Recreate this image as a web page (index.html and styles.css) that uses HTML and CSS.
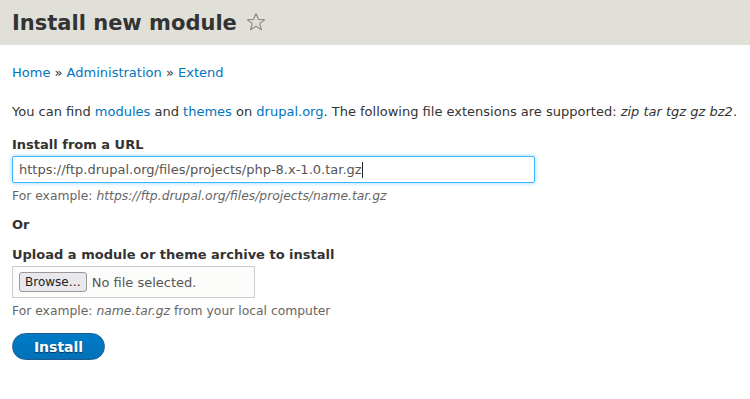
FILE: index.html
```html
<!DOCTYPE html>
<html lang="en">
<head>
    <meta charset="UTF-8">
    <title>Install new module</title>
    <link rel="stylesheet" href="styles.css">
</head>
<body>
    <header class="page-head">
        <h1 class="page-title">Install new module
            <svg class="star" width="20" height="20" viewBox="0 0 20 20">
                <path d="M10 1.5 L12.4 7.3 L18.6 7.6 L13.8 11.6 L15.4 17.7 L10 14.3 L4.6 17.7 L6.2 11.6 L1.4 7.6 L7.6 7.3 Z" fill="none" stroke="#8f8f86" stroke-width="1.2" stroke-linejoin="round"/>
            </svg>
        </h1>
    </header>

    <main class="content">
        <nav class="breadcrumb">
            <a href="#">Home</a> » <a href="#">Administration</a> » <a href="#">Extend</a>
        </nav>

        <p class="help">You can find <a href="#">modules</a> and <a href="#">themes</a> on <a href="#">drupal.org</a>. The following file extensions are supported: <em>zip tar tgz gz bz2</em>.</p>

        <div class="form-item">
            <label class="form-label">Install from a URL</label>
            <div class="text-field"><span>https://ftp.drupal.org/files/projects/php-8.x-1.0.tar.gz</span><span class="caret"></span></div>
            <div class="description">For example: <em>https://ftp.drupal.org/files/projects/name.tar.gz</em></div>
        </div>

        <div class="or">Or</div>

        <div class="form-item upload">
            <label class="form-label">Upload a module or theme archive to install</label>
            <div class="file-field">
                <span class="browse">Browse…</span>
                <span class="no-file">No file selected.</span>
            </div>
            <div class="description">For example: <em>name.tar.gz</em> from your local computer</div>
        </div>

        <button type="button" class="btn-install">Install</button>
    </main>
</body>
</html>
```

FILE: styles.css
```css
body {
    margin: 0;
    padding: 0;
    font-family: "DejaVu Sans", sans-serif;
    font-size: 13px;
    color: #333;
    background: #fff;
}
a {
    color: #0074bd;
    text-decoration: none;
}
.page-head {
    background-color: #e0e0d8;
    height: 45px;
    padding: 0 12px;
    display: flex;
    align-items: center;
}
.page-title {
    margin: 0;
    font-size: 21px;
    font-weight: bold;
    color: #333;
    display: flex;
    align-items: center;
    gap: 9px;
}
.star {
    display: block;
    margin-top: -1px;
}
.content {
    padding: 0 12px;
}
.breadcrumb {
    margin-top: 20px;
    line-height: 16px;
}
.help {
    margin: 22px 0 0 0;
    line-height: 18px;
}
.form-item {
    margin-top: 15px;
}
.form-label {
    display: block;
    font-weight: bold;
    line-height: 18px;
    margin-bottom: 2px;
}
.text-field {
    width: 523px;
    height: 27px;
    box-sizing: border-box;
    border: 1px solid #40b6ff;
    border-radius: 2px;
    box-shadow: 0 0 4px rgba(64, 182, 255, 0.6);
    padding: 0 6px;
    display: flex;
    align-items: center;
    color: #555;
    font-size: 13px;
}
.caret {
    display: inline-block;
    width: 1px;
    height: 16px;
    background: #222;
}
.description {
    color: #666;
    font-size: 12.35px;
    line-height: 16px;
    margin-top: 5px;
}
.or {
    font-weight: bold;
    margin-top: 12px;
    line-height: 18px;
}
.upload {
    margin-top: 12px;
}
.upload .description {
    margin-top: 5px;
}
.file-field {
    width: 243px;
    height: 32px;
    box-sizing: border-box;
    border: 1px solid #ccc;
    background: #fcfcfa;
    display: flex;
    align-items: center;
    padding: 0 6px;
    gap: 5px;
}
.browse {
    border: 1px solid #999;
    border-radius: 3px;
    background: #e9e9ed;
    padding: 2px 5px;
    font-size: 12px;
    color: #222;
}
.no-file {
    color: #555;
}
.btn-install {
    margin-top: 14px;
    width: 93px;
    height: 27px;
    border: 1px solid #1e5c90;
    border-radius: 20px;
    background: linear-gradient(#007bc6, #0071b8);
    color: #fff;
    font-family: "DejaVu Sans", sans-serif;
    font-size: 14px;
    font-weight: bold;
    text-shadow: 0 1px 1px rgba(0, 0, 0, 0.5);
    cursor: pointer;
}
```
